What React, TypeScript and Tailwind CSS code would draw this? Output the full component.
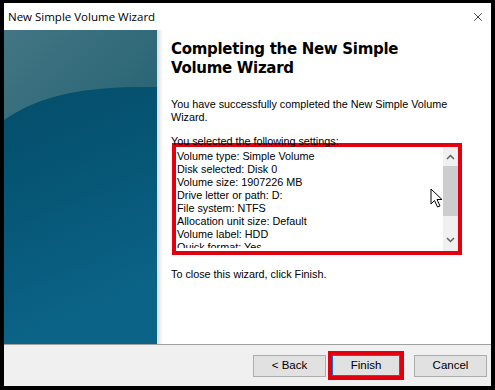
import { X } from "lucide-react";

const settings = [
  "Volume type: Simple Volume",
  "Disk selected: Disk 0",
  "Volume size: 1907226 MB",
  "Drive letter or path: D:",
  "File system: NTFS",
  "Allocation unit size: Default",
  "Volume label: HDD",
  "Quick format: Yes",
];

function SidePanel() {
  return (
    <svg width="153" height="314" viewBox="0 0 153 314" className="block">
      <defs>
        <linearGradient id="body" x1="0" y1="0" x2="0.2" y2="1">
          <stop offset="0" stopColor="#034a65" />
          <stop offset="0.5" stopColor="#065574" />
          <stop offset="1" stopColor="#0b6488" />
        </linearGradient>
        <linearGradient id="cap" x1="0" y1="0" x2="1" y2="0.6">
          <stop offset="0" stopColor="#437683" />
          <stop offset="1" stopColor="#2b6676" />
        </linearGradient>
      </defs>
      <rect width="153" height="314" fill="url(#body)" />
      <path d="M0,0 H153 V57 C90,56 40,62 0,90 Z" fill="url(#cap)" />
    </svg>
  );
}

function Button({ label }: { label: string }) {
  return (
    <div className="flex h-[22px] w-[73px] items-center justify-center border border-[#adadad] bg-[#e1e1e1] text-[11.5px] text-black">
      {label}
    </div>
  );
}

export default function App() {
  return (
    <div className="h-[390px] w-[495px] bg-black pb-[4px] pl-[4px] pr-[4px] pt-[3px] font-['Liberation_Sans',Arial,sans-serif]">
      <div className="flex h-full flex-col bg-white">
        <div className="flex h-[27px] items-center justify-between pl-[4px] pr-[6px]">
          <span className="font-['Open_Sans',sans-serif] text-[11.5px] text-black">
            New Simple Volume Wizard
          </span>
          <X className="h-[14px] w-[14px] text-black" strokeWidth={1.2} />
        </div>

        <div className="flex flex-1">
          <SidePanel />
          <div className="w-[6px] bg-gradient-to-r from-[#d8dde0] to-white" />
          <div className="relative flex-1 pl-[8px] pt-[10px] text-[10.8px] leading-[13px] text-black">
            <h1 className="font-['DejaVu_Sans',Verdana,sans-serif] text-[15px] font-bold leading-[19px] tracking-[-0.3px]">
              Completing the New Simple
              <br />
              Volume Wizard
            </h1>
            <p className="mt-[20px]">
              You have successfully completed the New Simple Volume
              <br />
              Wizard.
            </p>
            <p className="mt-[11px]">You selected the following settings:</p>
            <div className="ml-[1px] mt-[-5px] flex h-[112px] w-[290px] border-[4px] border-[#e2000e] bg-white">
              <div className="h-[101px] flex-1 overflow-hidden pl-[1px] pt-[3px]">
                {settings.map((s) => (
                  <div key={s} className="whitespace-nowrap">
                    {s}
                  </div>
                ))}
              </div>
              <div className="flex w-[15px] flex-col items-center bg-[#f0f0f0]">
                <svg width="9" height="6" viewBox="0 0 9 6" className="mt-[7px]">
                  <path d="M1,5 L4.5,1.5 L8,5" fill="none" stroke="#606060" strokeWidth="1.5" />
                </svg>
                <div className="mt-[6px] h-[50px] w-[15px] bg-[#cdcdcd]" />
                <div className="flex-1" />
                <svg width="9" height="6" viewBox="0 0 9 6" className="mb-[8px]">
                  <path d="M1,1 L4.5,4.5 L8,1" fill="none" stroke="#606060" strokeWidth="1.5" />
                </svg>
              </div>
            </div>
            <p className="mt-[13px]">To close this wizard, click Finish.</p>

            <svg
              width="14"
              height="21"
              viewBox="0 0 14 21"
              className="absolute left-[267px] top-[158px]"
            >
              <path
                d="M1,1 L1,16 L4.5,12.5 L7.5,19 L10,18 L7,11.5 L12,11.5 Z"
                fill="white"
                stroke="black"
                strokeWidth="1"
                strokeLinejoin="round"
              />
            </svg>
          </div>
        </div>

        <div className="h-px bg-[#a0a0a0]" />
        <div className="flex h-[41px] items-center justify-end bg-[#f0f0f0] pr-[4px]">
          <Button label="< Back" />
          <div className="ml-[2px] border-[4px] border-[#e2000e]">
            <div className="flex h-[21px] w-[68px] items-center justify-center border border-[#0078d7] bg-[#e1e1e1] text-[11.5px] text-black">
              Finish
            </div>
          </div>
          <div className="ml-[10px]">
            <Button label="Cancel" />
          </div>
        </div>
      </div>
    </div>
  );
}
